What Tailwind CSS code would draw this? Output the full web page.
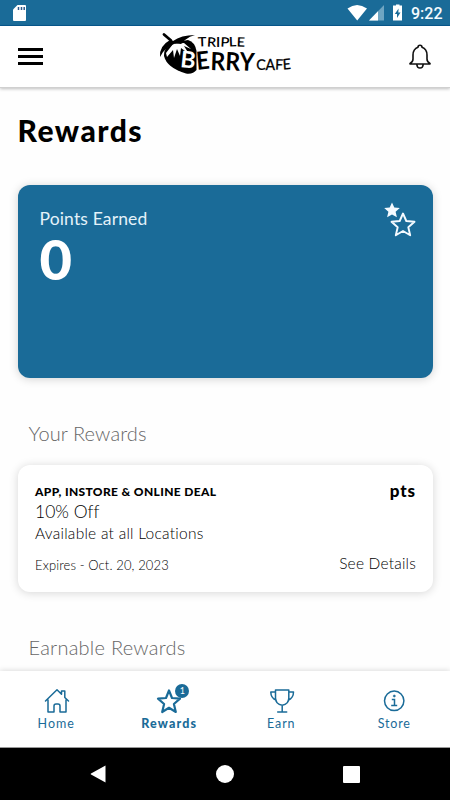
<!DOCTYPE html>
<html lang="en">
<head>
<meta charset="utf-8">
<title>Rewards</title>
<script src="https://cdn.jsdelivr.net/npm/@tailwindcss/browser@4"></script>
</head>
<body class="bg-white">
<div class="flex flex-col w-[450px] h-[800px] overflow-hidden bg-[#fefefe] font-[Lato,sans-serif] text-black whitespace-nowrap [font-variant-ligatures:none]">
  <!-- Status bar -->
  <div class="h-[26px] shrink-0 bg-[#1a6b98] border-b border-[#075990] flex items-center">
    <svg class="ml-[13px] mt-px" width="14" height="18" viewBox="0 0 14 18"><path d="M4.500 1H12a1 1 0 0 1 1 1v14a1 1 0 0 1-1 1H1a1 1 0 0 1-1-1V5.500z" fill="#fff"/><path d="M5.500 3v3M8.500 3v3M11.200 3v3" stroke="#2d5a8c" stroke-width="1.500"/></svg>
    <svg class="ml-auto" width="74" height="20" viewBox="0 0 74 20"><path d="M.500 5.500Q10-1.500 20 5.500L10.200 17.500z" fill="#fff"/><path d="M37 2v15.500H22z" fill="#6fa5c2"/><path d="M31 8.200v9.300h-9z" fill="#fff"/><path d="M49 2.500v-1h3.500v1h2.500v15H46v-15z" fill="#fff"/><path d="M51.600 5.500l-3.800 5.500h2.200v4l3.500-5.600h-2.200z" fill="#1a6b98"/></svg>
    <div class="-ml-[10px] mr-[9px] mt-[2px] font-[Roboto] text-[16px] leading-5 font-medium text-[#f4fbff] w-[30px]">9:22</div>
  </div>
  <!-- App header -->
  <div class="h-[62px] shrink-0 bg-white flex items-center pl-[18px] pr-[19px] border-b border-[#d0d0d0] shadow-[0_1px_3px_rgba(0,0,0,0.25)]">
    <div class="flex flex-col gap-[4.500px] w-[25px]"><div class="h-[2.500px] bg-black"></div><div class="h-[2.500px] bg-black"></div><div class="h-[2.500px] bg-black"></div></div>
    <svg class="ml-[114px] -mt-[5px]" width="136" height="46" viewBox="157 31 136 46">
      <path d="M166 48Q176 41 188 40Q195 42 196.500 51V70Q193 74.500 186 73.500Q167 68 164 56Q164 51 166 48z"/>
      <path d="M166 53l7-9 11-1 7 6-7-3 5 8-8-6-1 8-3-7-3 9-1-8-6 7z" fill="#fff"/>
      <path d="M164 34.500l7 6" stroke="#000" stroke-width="2.800" stroke-linecap="round"/>
      <path d="M170 40l3 1q8-6 22-6-5 1-10 5l-4 4-5-1-4 2-5 3-4 4-3 5q-1-11 10-17z"/>
      <g font-family="Lato" font-weight="700">
        <text x="198" y="46.500" font-size="13" font-weight="600" textLength="47" lengthAdjust="spacingAndGlyphs" rotate="-2 3 0 3 -2 2">TRIPLE</text>
        <text x="180.500" y="67.500" font-size="23" fill="#fff" transform="rotate(6 186 60)">B</text>
        <text x="197" y="70" font-size="25" textLength="57" lengthAdjust="spacingAndGlyphs" rotate="-6 2 3 4">ERRY</text>
        <text x="256" y="69.500" font-size="14.500" font-weight="400" stroke="#000" stroke-width=".3" textLength="35" lengthAdjust="spacingAndGlyphs" rotate="3 0 2 -4">CAFE</text>
      </g>
    </svg>
    <svg class="ml-auto" width="22" height="26" viewBox="0 0 22 26" fill="none" stroke="#111" stroke-width="1.600" stroke-linecap="round" stroke-linejoin="round"><path d="M11 1.200q2 0 2 2Q18 5 18 11v4q0 3 3 4.500V20H1v-.500Q4 18 4 15v-4q0-6 5-7.800Q9 1.200 11 1.200zM7.800 20.500q.300 3.500 3.200 3.500t3.200-3.500"/></svg>
  </div>
  <!-- Scrolling content -->
  <main class="h-[583px] shrink-0 overflow-hidden px-[17.500px]">
    <h1 class="mt-[24px] text-[30px] leading-9 font-black tracking-[1.500px]">Rewards</h1>
    <section class="mt-[37px] h-[193px] rounded-xl bg-[#1a6b98] shadow-[0_1px_10px_rgba(0,0,0,0.18)] flex justify-between items-start pl-[22px] pr-[17px] text-white">
      <div class="pt-[22px]">
        <div class="text-[17.500px] leading-6 text-[#e4f2fa] tracking-[0.150px]">Points Earned</div>
        <div class="text-[56px] leading-[54px] mt-px font-black">0</div>
      </div>
      <svg class="mt-[16px]" width="32" height="36" viewBox="0 0 32 36"><path d="M8 1.500l2.300 5.100 5.500.500-4.200 3.700 1.300 5.500L8 13.400l-4.900 2.900 1.300-5.500L.200 7.100l5.500-.500z" fill="#f4faff"/><path d="M19 12.500l3.300 7.500 8.200.800-6.200 5.400 1.900 8.100-7.200-4.300-7.200 4.300 1.900-8.100-6.200-5.400 8.200-.800z" fill="#1a6b98" stroke="#f4faff" stroke-width="1.900" stroke-linejoin="round"/></svg>
    </section>
    <h2 class="mt-[43px] ml-[11px] text-[20px] leading-6 font-light text-[#666] tracking-[0.100px]">Your Rewards</h2>
    <section class="mt-[20px] h-[127px] rounded-xl bg-white shadow-[0_1px_10px_rgba(0,0,0,0.160)] flex justify-between px-[17.500px]">
      <div class="pt-[17px]">
        <div class="text-[12px] leading-5 font-black tracking-[0.360px]">APP, INSTORE &amp; ONLINE DEAL</div>
        <div class="text-[17.500px] leading-5 font-light">10% Off</div>
        <div class="-mt-px text-[15.500px] leading-6 font-light tracking-[0.260px]">Available at all Locations</div>
        <div class="mt-[10px] text-[13px] leading-5 font-light tracking-[0.120px]">Expires - Oct. 20, 2023</div>
      </div>
      <div class="pt-[16px] text-right">
        <div class="text-[17px] leading-5 font-black tracking-[0.900px] -mr-px">pts</div>
        <div class="mt-[52px] text-[15.500px] leading-5 font-light tracking-[0.200px] -mr-px">See Details</div>
      </div>
    </section>
    <h2 class="mt-[43px] ml-[11px] text-[20px] leading-6 font-light text-[#666] tracking-[0.250px]">Earnable Rewards</h2>
  </main>
  <!-- Tab bar -->
  <nav class="h-[77px] shrink-0 relative grid grid-cols-4 bg-white border-b border-[#999] shadow-[0_-1px_5px_rgba(0,0,0,0.13)] text-[#1a6b98] text-[12.500px] leading-4">
    <div class="flex flex-col items-center pt-[17px]">
      <svg class="ml-[2px]" width="26" height="26" viewBox="0 0 26 26" fill="none" stroke="#1a6b98" stroke-width="1.500" stroke-linejoin="round" stroke-linecap="round"><path d="M1.500 13L13 1.800l4.500 4.400V3h3.300v6.500l3.700 3.500M4 11.500V24h6v-6q0-2 2-2h2q2 0 2 2v6h6V11.500"/></svg>
      <span class="mt-[2px] tracking-[1px]">Home</span>
    </div>
    <div class="flex flex-col items-center pt-[17px]">
      <div class="relative">
        <svg class="ml-px" width="26" height="26" viewBox="0 0 26 26"><path d="M13 2.500l3 7.500 8 .700-6.100 5.300 1.900 8-6.800-4.200L6.200 24l1.900-8L2 10.700l8-.700z" fill="none" stroke="#1a6b98" stroke-width="2.200" stroke-linejoin="round"/></svg>
        <span class="absolute left-[20px] -top-[4px] size-[14px] rounded-full bg-[#1a6b98] text-white text-[9px] leading-[14px] text-center">1</span>
      </div>
      <span class="mt-[2px] ml-px font-black tracking-[1.150px]">Rewards</span>
    </div>
    <div class="flex flex-col items-center pt-[17px]">
      <svg class="ml-px" width="26" height="26" viewBox="0 0 26 26" fill="none" stroke="#1a6b98" stroke-width="1.500" stroke-linejoin="round" stroke-linecap="round"><path d="M6.500 2h13.300v8q0 6.200-6.600 7.200Q6.500 16.200 6.500 10zM6.500 4H1.800q0 6 5.400 8.200M19.800 4h4.700q0 6-5.300 8.200M13.200 17.500V24M8.700 24h9"/></svg>
      <span class="mt-[2px] tracking-[0.900px]">Earn</span>
    </div>
    <div class="flex flex-col items-center pt-[17px]">
      <svg class="ml-px" width="26" height="26" viewBox="0 0 26 26" fill="none" stroke="#1a6b98" stroke-width="1.500"><circle cx="13.200" cy="12.800" r="9.700"/><path d="M10.800 11.500h2.700v6M10.200 17.500h6"/><circle cx="13.300" cy="8" r="1.100" fill="#1a6b98" stroke-width=".500"/></svg>
      <span class="mt-[2px] ml-px tracking-[0.800px]">Store</span>
    </div>
  </nav>
  <!-- System navigation -->
  <div class="h-[52px] shrink-0 bg-black flex items-center justify-between pl-[90px] pr-[90px]">
    <svg width="16" height="18" viewBox="0 0 16 18"><path d="M15.500.500v17L1 9.500q-.800-.500 0-1z" fill="#fff"/></svg>
    <div class="size-[18px] rounded-full bg-white"></div>
    <div class="size-[17px] rounded-[1px] bg-white"></div>
  </div>
</div>
</body>
</html>
